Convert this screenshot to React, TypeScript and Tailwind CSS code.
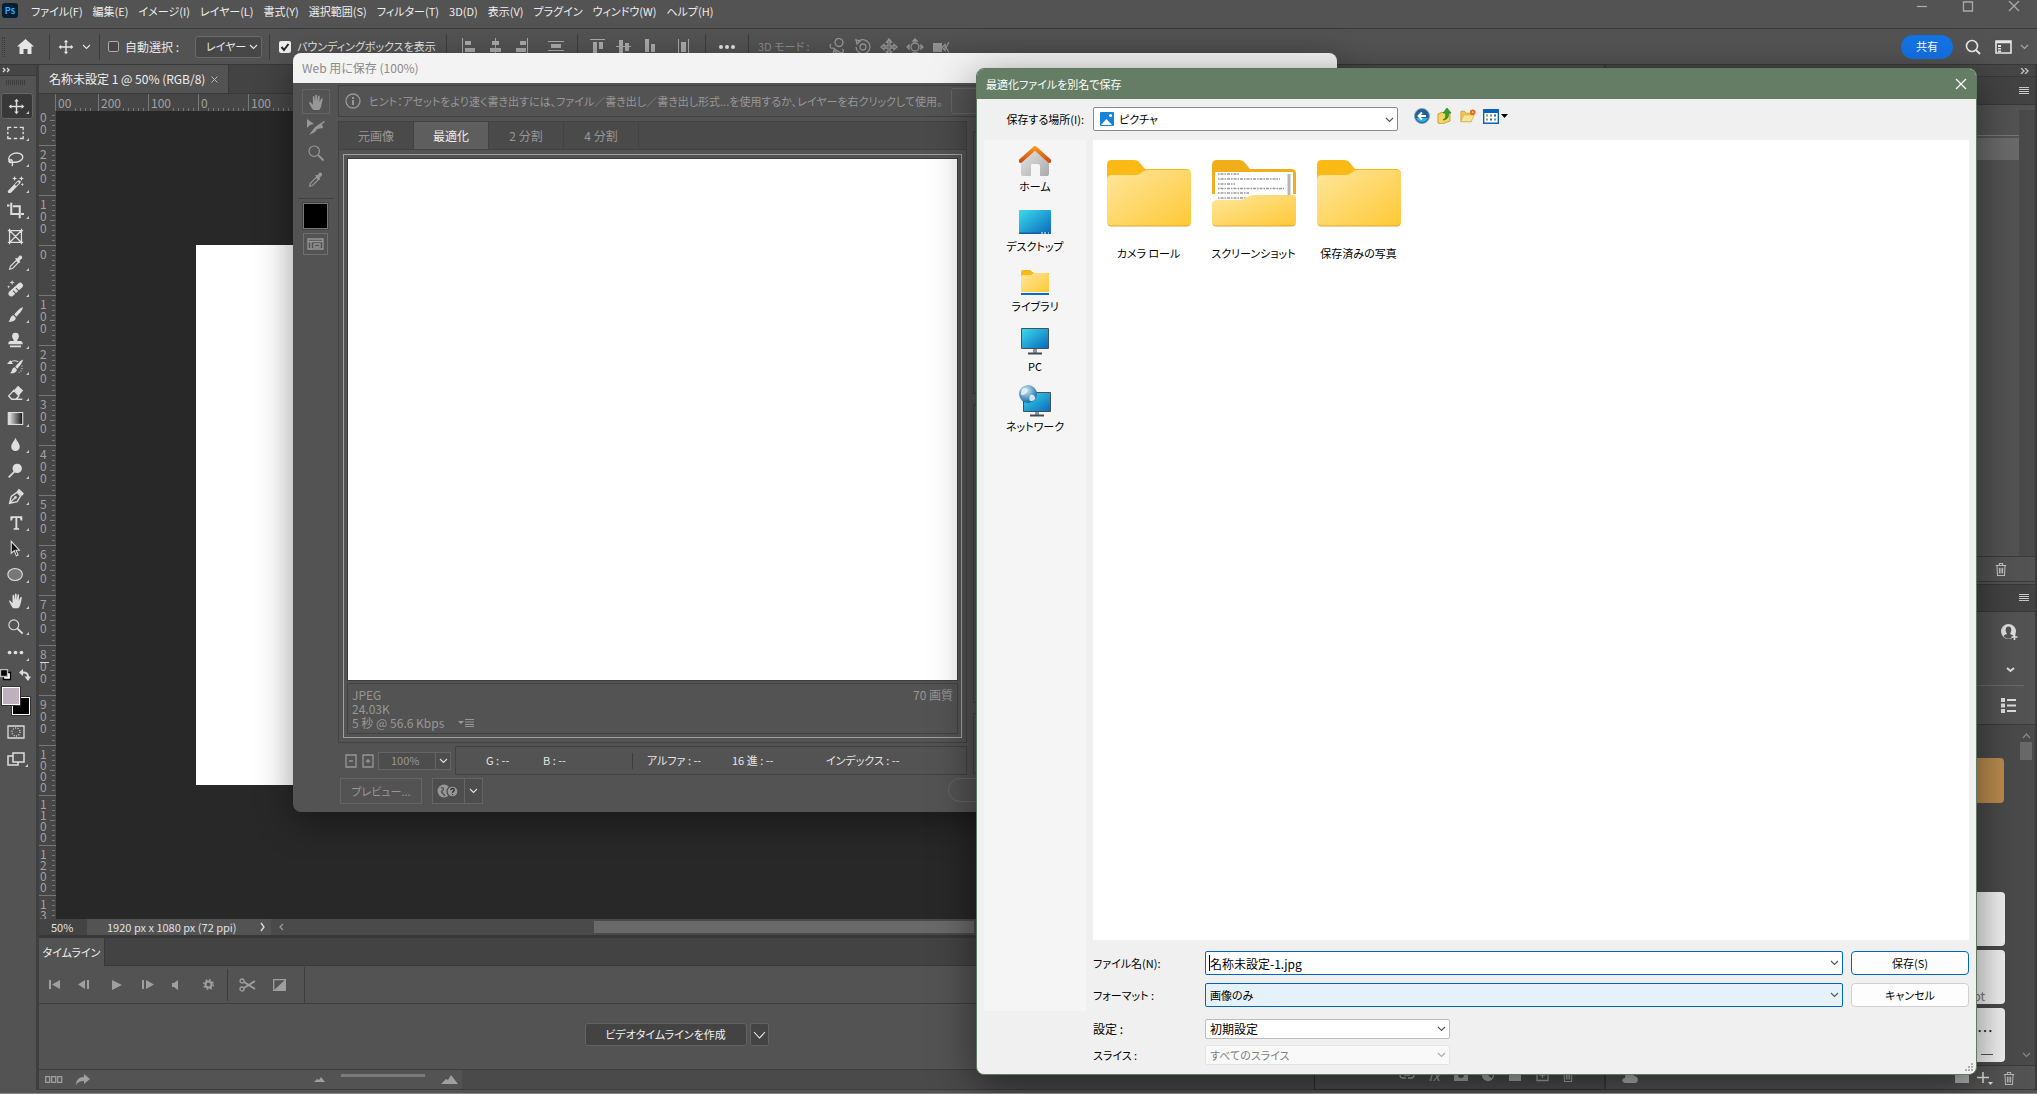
import type { ReactNode } from "react";

type SvgProps = { w?: number; h?: number; children: ReactNode; className?: string; box?: string };

function Svg({ w = 20, h = 20, box, children, className = "" }: SvgProps) {
  return (
    <svg
      width={w}
      height={h}
      viewBox={box ?? `0 0 ${w} ${h}`}
      fill="none"
      stroke="currentColor"
      strokeWidth={1.3}
      className={`shrink-0 ${className}`}
      aria-hidden="true"
    >
      {children}
    </svg>
  );
}

const fill = { fill: "currentColor", stroke: "none" };

function Chevron({ className = "" }: { className?: string }) {
  return (
    <Svg w={9} h={6} className={className}>
      <path strokeWidth="1.100" d="M1 1l3.500 3.500L8 1" />
    </Svg>
  );
}

const Hand = (
  <path
    {...fill}
    d="M6 18.5C4.200 16.500 2.500 13 1.600 10.800c-.5-1.300.8-1.800 1.600-.8l2.300 2.700V3.800c0-1.400 1.700-1.400 1.800 0l.5 5.200.5-6.700c.1-1.300 1.900-1.300 2 0l.1 6.700 1-6c.3-1.300 1.900-1 1.800.3L12.800 9.700l1.800-3.600c.6-1.200 2.200-.6 1.800.7-.8 2.600-1 6.200-2.200 9-.5 1.300-1.200 2.300-2 2.700z"
    transform="translate(1 .5)"
  />
);
const Dropper = (
  <>
    <path d="M3 18l1-3.500 7-7 2.500 2.500-7 7L3 18z" />
    <path {...fill} d="M9.500 5.500l1.200-1.200 1.300 1 2.500-3c1.500-1.500 4.500 1 3 3l-2.900 2.500 1 1.500-1.300 1.200z" />
  </>
);
const Move = (
  <>
    <path strokeWidth="1.700" d="M10 3v14M3 10h14" />
    <path {...fill} d="M10 .8L7.300 4h5.400zM10 19.200L7.300 16h5.400zM.8 10L4 7.300v5.400zM19.200 10L16 7.300v5.400z" />
  </>
);
const Lens = (
  <>
    <circle cx="8" cy="8" r="5.800" />
    <path strokeWidth="2.200" d="M12.400 12.400l6 6" />
  </>
);
const Trash = <path d="M3.500 5.500h13M8 5V3h4v2M5 6l.6 12h8.800L15 6M8 8.500v7M10 8.500v7M12 8.500v7" />;

const tools: { name: string; icon: ReactNode; noMenu?: boolean }[] = [
  { name: "移動ツール", icon: Move },
  { name: "長方形選択ツール", icon: <path strokeWidth="1.600" d="M1 7V4h4M8 4h4M15 4h4v3M19 9v3M19 14v3h-4M12 17H8M5 17H1v-3M1 12V9" /> },
  {
    name: "なげなわツール",
    icon: <path strokeWidth="1.600" d="M5.500 14.500C3.500 14 2 12 2 10c.5-4 5-6.500 9.500-6.500S19 6 18.500 9s-5 6-12 5.300M5 11.500c-2 0-3.300 1.200-2.500 2.500s3.500 1 3.700-.5-1-1.800-1.200-2zM6 15c1 1.500.5 3 0 4" />,
  },
  {
    name: "自動選択ツール",
    icon: (
      <>
        <path d="M3 18.500L14 7" strokeWidth="4" strokeLinecap="round" />
        <path d="M10 11l3.500-3.600" stroke="#535353" strokeWidth="2" />
        <path {...fill} d="M9 0l.8 2.200L12 3l-2.200.8L9 6l-.8-2.200L6 3l2.200-.8zM17 0l.8 2.200L20 3l-2.200.8L17 6l-.8-2.200L14 3l2.200-.8zM18 8l.6 1.500 1.400.5-1.400.5L18 12l-.6-1.500L16 10l1.400-.5z" />
      </>
    ),
  },
  { name: "切り抜きツール", icon: <path strokeWidth="2.400" d="M5 1v13h9M16.500 14H20M0 4h3M7 5h8v14" /> },
  { name: "フレームツール", noMenu: true, icon: <path strokeWidth="1.500" d="M3 3h14v14H3zM3 3l14 14M17 3L3 17M1 3h18M1 17h18M3 1v18M17 1v18" /> },
  { name: "スポイトツール", icon: Dropper },
  {
    name: "修復ブラシツール",
    icon: (
      <>
        <path d="M5 16L15.500 6.500" strokeWidth="6.500" strokeLinecap="round" />
        <path d="M7 12.500l4 4M10.500 9.500l4 4" stroke="#535353" strokeWidth="1.200" />
        <path {...fill} d="M6 0l.7 2L9 3l-2.300.8L6 6l-.7-2.200L3 3l2.300-1zM2 6l.5 1.500L4 8l-1.500.5L2 10l-.5-1.500L0 8l1.500-.5z" />
      </>
    ),
  },
  { name: "ブラシツール", icon: <path {...fill} d="M18.500 1.500c1 .8-3 7.200-7.500 11L8.500 10C12 5.500 17.500.5 18.500 1.500zM7.500 11l2.800 2.800c.2 3.700-4.800 5.200-8.800 4.700C4.500 17 3 12 7.500 11z" /> },
  { name: "コピースタンプツール", icon: <path {...fill} d="M10 1a4 4 0 014 4c0 2.500-2 3.500-2 5.500h4c1.500 0 2.500 1.200 2.500 4h-17c0-2.800 1-4 2.500-4h4C8 8.500 6 7.500 6 5a4 4 0 014-4zM3.500 16h13v2h-13z" /> },
  {
    name: "ヒストリーブラシツール",
    icon: (
      <>
        <path {...fill} d="M18.500 2c1 .8-2.500 7-6.500 10.500l-2.300-2.200C13 6 17.500 1.200 18.500 2zM9 11l2.500 2.500c.2 3.300-4 5-8 4.500C6.500 16.500 5 12 9 11zM0 7l4-4.500L7 7z" />
        <path d="M4 5c3-2.500 7-2 9-.5" />
        <path strokeDasharray="1 2" d="M17.500 9c1 4-1 8-5.500 9" />
      </>
    ),
  },
  {
    name: "消しゴムツール",
    icon: (
      <>
        <path strokeWidth="1.600" d="M8 7.500L2 14l3.500 4h5L14 14zM7 18h11" />
        <path {...fill} d="M8.500 7L13 2l6 5.500-5 6z" />
      </>
    ),
  },
  {
    name: "グラデーションツール",
    icon: (
      <>
        <defs>
          <linearGradient id="toolGradient">
            <stop offset="0" stopColor="#eee" />
            <stop offset="1" stopColor="#111" />
          </linearGradient>
        </defs>
        <rect x="1.500" y="3" width="17" height="14" fill="url(#toolGradient)" />
      </>
    ),
  },
  { name: "ぼかしツール", icon: <path {...fill} d="M10 2c1 3.500 5 6.500 5 10.500C15 15.500 13 17.500 10 17.500S5 15.500 5 12.500C5 8.500 9 5.500 10 2z" /> },
  {
    name: "覆い焼きツール",
    icon: (
      <>
        <circle cx="12" cy="7.500" r="5.500" {...fill} />
        <path strokeWidth="2" d="M2 18l7-7" />
      </>
    ),
  },
  {
    name: "ペンツール",
    icon: (
      <>
        <path strokeWidth="1.600" d="M3 18l2-8 7-5 4 4.500-4 6.500zM3.500 17.500l6-6" />
        <circle cx="10" cy="11" r="1.500" {...fill} />
        <path {...fill} d="M11.500 4L14 1l6 5.500-2.500 3z" />
      </>
    ),
  },
  { name: "横書き文字ツール", icon: <path {...fill} d="M4 2.500h14v5h-1.800L15 4.700h-2.900v11.800l2.100.4V18.500H7.800v-1.600l2.100-.4V4.700H7l-1.200 2.800H4z" /> },
  { name: "パスコンポーネント選択ツール", icon: <path d="M5 1.500v14l3.500-3 2.500 6 2-1-2.500-5.500h4z" fill="#111" /> },
  { name: "楕円形ツール", icon: <ellipse cx="9.500" cy="10" rx="8.500" ry="7" fill="#777" /> },
  { name: "手のひらツール", icon: Hand },
  { name: "ズームツール", icon: Lens },
  {
    name: "ツールバーを編集",
    icon: (
      <>
        <circle cx="3" cy="10" r="2.200" {...fill} />
        <circle cx="10" cy="10" r="2.200" {...fill} />
        <circle cx="17" cy="10" r="2.200" {...fill} />
      </>
    ),
  },
];

function Corner() {
  return (
    <Svg w={3} h={3} className="absolute right-[3px] bottom-1 text-[#c8c8c8]">
      <path {...fill} d="M3 0v3H0z" />
    </Svg>
  );
}

function MenuBar() {
  const items = ["ファイル(F)", "編集(E)", "イメージ(I)", "レイヤー(L)", "書式(Y)", "選択範囲(S)", "フィルター(T)", "3D(D)", "表示(V)", "プラグイン", "ウィンドウ(W)", "ヘルプ(H)"];
  return (
    <header className="flex h-[29px] shrink-0 items-start border-b border-[#3a3a3a] pl-0.5 text-[#eee]">
      <div className="mt-[3px] flex h-[15px] w-4 items-center justify-center rounded-[3px] bg-[#001e36] text-[9px] font-bold text-[#31a8ff]">Ps</div>
      <nav className="ml-2 flex h-[22px] items-center text-[11px]">
        {items.map((t) => (
          <button key={t} className="px-[5px] whitespace-nowrap">{t}</button>
        ))}
      </nav>
      <div className="mt-px ml-auto flex gap-[34px] pr-[17px] text-[#aaa]">
        <button aria-label="最小化"><Svg w={12} h={12}><path d="M1 5.500h10" /></Svg></button>
        <button aria-label="最大化"><Svg w={12} h={12}><path d="M1.500 1h9v9h-9z" /></Svg></button>
        <button aria-label="閉じる"><Svg w={12} h={12}><path d="M1 0l10 10M11 0L1 10" /></Svg></button>
      </div>
    </header>
  );
}

const Sep = ({ className = "" }: { className?: string }) => <span className={`h-[26px] w-px shrink-0 bg-[#3c3c3c] ${className}`} />;

function OptionsBar() {
  const align1 = [
    <path key="a" {...fill} d="M1 0h1v18H1zM4 3h6v4H4zM4 10h10v4H4z" />,
    <path key="b" {...fill} d="M8 0h1v18H8zM5 3h7v4H5zM3 10h11v4H3z" />,
    <path key="c" {...fill} d="M14 0h1v18h-1zM7 3h6v4H7zM3 10h10v4H3z" />,
  ];
  const align2 = [
    <path key="a" {...fill} d="M1 1h15v1H1zM4 4h4v12H4zM10 4h4v7h-4z" />,
    <path key="b" {...fill} d="M1 8h15v1H1zM4 2h4v14H4zM10 5h4v8h-4z" />,
    <path key="c" {...fill} d="M1 15h15v1H1zM4 1h4v13H4zM10 6h4v8h-4z" />,
  ];
  const modes = [
    <path key="1" d="M3 6c-2 3 0 5 2 4l8 5c3 0 3-3 1-4M7 5a4 4 0 117 2c-1 2-5 2-6 0zM6 12l3 3-4 1z" />,
    <path key="2" d="M5 3a7 7 0 11-3 6M2 2l4 1-3 3zM9 6a3 3 0 110 6 3 3 0 010-6z" />,
    <path key="3" d="M9 1l2.500 3H10v4h4V6.500L17 9l-3 2.500V10h-4v4h1.500L9 17l-2.500-3H8v-4H4v1.500L1 9l3-2.500V8h4V4H6.500z" />,
    <path key="4" d="M9 5a4 4 0 110 8 4 4 0 010-8zM9 1L7 3h4zM9 17l-2-2h4zM1 9l2-2v4zM17 9l-2-2v4z" />,
    <g key="5"><path {...fill} d="M1 5h9v9H1z" /><path d="M10 9.500l3-3v6zM17 4l-3 5.500 3 5" /></g>,
  ];
  return (
    <div className="flex h-9 shrink-0 items-center border-b border-[#383838] text-[#e6e6e6]">
      <span className="ml-0.5 h-5 w-[3px] border-x border-dotted border-[#3a3a3a]" />
      <button aria-label="ホーム" className="ml-3">
        <Svg w={17} h={16}><path {...fill} d="M8.500 0L17 7.500h-2.500V15h-4v-5h-4v5h-4V7.500H0z" /></Svg>
      </button>
      <Sep className="ml-[15px]" />
      <Svg w={16} h={16} box="0 0 20 20" className="ml-2">{Move}</Svg>
      <Chevron className="ml-2" />
      <Sep className="ml-2" />
      <input id="autoSel" type="checkbox" className="ml-2 h-[11px] w-[11px] appearance-none rounded-[2px] border border-[#aaa] bg-[#474747]" />
      <label htmlFor="autoSel" className="ml-1.5 w-[66px] whitespace-nowrap">自動選択 :</label>
      <span className="relative ml-1 flex items-center">
        <select aria-label="自動選択の対象" className="h-[22px] w-[67px] appearance-none rounded-[3px] border border-[#6a6a6a] bg-[#474747] pl-2.5 text-[11px]">
          <option>レイヤー</option>
        </select>
        <Chevron className="pointer-events-none absolute right-1" />
      </span>
      <Sep className="ml-[7px]" />
      <label className="ml-[9px] flex items-center gap-1.5 whitespace-nowrap">
        <span className="relative flex">
          <input type="checkbox" defaultChecked className="h-3 w-3 appearance-none rounded-[2px] bg-[#f0f0f0]" />
          <Svg w={12} h={12} className="pointer-events-none absolute inset-0 text-[#222]"><path strokeWidth="2" d="M2.500 6l2.500 3 4.500-6" /></Svg>
        </span>
        <span className="w-[138px] text-[11px]">バウンディングボックスを表示</span>
      </label>
      <Sep className="ml-[11px]" />
      <div className="ml-[14px] flex items-center gap-2 text-[#aaa]">
        {align1.map((a, i) => <Svg key={i} w={18} h={18}>{a}</Svg>)}
        <Svg w={18} h={18} className="ml-2"><path {...fill} d="M1 3h16v1H1zM4 6h10v4H4zM1 12h16v1H1z" /></Svg>
      </div>
      <Sep className="ml-3" />
      <div className="ml-[11px] flex items-center gap-2 text-[#aaa]">
        {align2.map((a, i) => <Svg key={i} w={18} h={18}>{a}</Svg>)}
        <Svg w={18} h={18} className="ml-2"><path {...fill} d="M3 1h1v16H3zM6 4h5v10H6zM13 1h1v16h-1z" /></Svg>
      </div>
      <Sep className="ml-3" />
      <Svg w={18} h={6} className="ml-3">
        <circle cx="3" cy="3" r="2" {...fill} /><circle cx="9" cy="3" r="2" {...fill} /><circle cx="15" cy="3" r="2" {...fill} />
      </Svg>
      <Sep className="ml-3" />
      <span className="ml-[9px] w-[66px] text-[11px] whitespace-nowrap text-[#8d8d8d]">3D モード :</span>
      <div className="ml-1 flex gap-2 text-[#999]">
        {modes.map((m, i) => <Svg key={i} w={18} h={18}>{m}</Svg>)}
      </div>
      <div className="ml-auto flex items-center pr-2">
        <button className="h-6 w-[52px] rounded-full bg-[#1473e6] text-[11px] text-white">共有</button>
        <Svg w={16} h={16} className="ml-3"><circle cx="7" cy="7" r="5.500" strokeWidth="1.600" /><path strokeWidth="2" d="M11 11l4 4" /></Svg>
        <Svg w={17} h={14} className="ml-3.5"><path strokeWidth="1.600" d="M1 1h15v12H1zM1 2.500h15" /><path {...fill} d="M3 5h3v2H3zM3 8h3v1.500H3zM3 10.500h3V12H3z" /></Svg>
        <Chevron className="ml-2 text-[#aaa]" />
      </div>
    </div>
  );
}

function ToolBar() {
  return (
    <aside className="flex w-[39px] shrink-0 flex-col border-r-[3px] border-[#3e3e3e] text-[#dedede]">
      <div className="flex h-[11px] items-center border-b border-[#3a3a3a] bg-[#464646] pl-0.5">
        <Svg w={8} h={6}><path d="M1 1l2 2-2 2M5 1l2 2-2 2" /></Svg>
      </div>
      <div className="flex h-[17px] items-start justify-center pt-1">
        <span className="mr-1 h-[5px] w-5 bg-[repeating-linear-gradient(90deg,#3d3d3d_0_1px,transparent_1px_2px)]" />
      </div>
      {tools.map((t, i) => (
        <button
          key={t.name}
          aria-label={t.name}
          className={`relative flex h-[26px] w-8 items-center justify-center pr-px ${i === 0 ? "ml-px rounded-[3px] border border-[#666] bg-[#383838]" : ""}`}
        >
          <Svg w={17} h={17} box="0 0 20 20">{t.icon}</Svg>
          {!t.noMenu && <Corner />}
        </button>
      ))}
      <div className="flex h-5 items-center justify-between pr-[5px]">
        <Svg w={12} h={12}><path d="M3.500 3.500h7v7h-7z" fill="#fff" stroke="#000" /><path d="M.5.500h7v7h-7z" fill="#000" stroke="#bbb" /></Svg>
        <Svg w={12} h={12}><path strokeWidth="2" d="M3 3.500h2c3 0 4 1 4 5" /><path {...fill} d="M0 3.500L4 0v7zM5.500 7.500h6.500L9 12z" /></Svg>
      </div>
      <div className="relative h-8">
        <span className="absolute top-3 left-3 h-[18px] w-[18px] border border-white bg-black outline outline-[#333]" />
        <span className="absolute top-0.5 left-0.5 h-[18px] w-[18px] border border-white bg-[#bfb0bc] outline outline-[#333]" />
      </div>
      <button aria-label="クイックマスク" className="flex h-[30px] w-[31px] items-center justify-center">
        <Svg w={18} h={14}><path d="M1 1h16v12H1z" /><circle cx="9" cy="7" r="4" strokeDasharray="1 1.500" /></Svg>
      </button>
      <button aria-label="スクリーンモード" className="relative flex h-6 w-[31px] items-center justify-center">
        <Svg w={18} h={14}><path strokeWidth="1.500" d="M6 4H1v9h10v-3" /><path strokeWidth="1.500" d="M6 1h11v9H6z" /></Svg>
        <Corner />
      </button>
    </aside>
  );
}

const hMarks = ["00", "200", "100", "0", "100"];
const vMarks = ["00", "200", "100", "0", "100", "200", "300", "400", "500", "600", "700", "800", "900", "1000", "1100", "1200", "13"];

function Workspace() {
  return (
    <main className="flex min-w-0 flex-1 flex-col">
      <div className="flex h-7 shrink-0 bg-[#434343]">
        <div className="flex items-center gap-2 border-r border-[#383838] bg-[#535353] px-2.5 text-[#eee]">
          <span className="w-[154px] whitespace-nowrap">名称未設定 1 @ 50% (RGB/8)</span>
          <button aria-label="タブを閉じる" className="text-[#bbb]"><Svg w={7} h={7}><path strokeWidth="1" d="M.5.500l6 6M6.500.500l-6 6" /></Svg></button>
        </div>
      </div>
      <div className="flex h-[18px] shrink-0 border-t border-[#383838] bg-[#464646] text-[#a2a2a2]">
        <div className="w-[17px] shrink-0 border-r border-[#777]" />
        <div className="flex min-w-0 flex-1">
          {hMarks.map((m, i) => (
            <div key={i} className={`relative shrink-0 pl-0.5 leading-[18px] ${i === 0 ? "w-[42px]" : "w-[50px] border-l border-[#777]"}`}>
              <span className="absolute inset-x-1 bottom-0 h-[3px] bg-[repeating-linear-gradient(90deg,#777_0_1px,transparent_1px_5px)]" />
              <span className="relative bg-[#464646]">{m}</span>
            </div>
          ))}
        </div>
      </div>
      <div className="flex min-h-0 flex-1">
        <div className="relative w-[17px] shrink-0 overflow-hidden bg-[#464646] text-[#a2a2a2]">
          <span className="absolute top-[551px] left-px z-10 h-px w-[9px] bg-[#d5d5d5]" />
          <div className="-mt-4">
            {vMarks.map((m, i) => (
              <div key={i} className="flex h-[50px] justify-between border-t border-[#777] pl-px">
                <span className={`w-2 break-all ${i === 0 ? "pt-[15px]" : "pt-0.5"} ${i > 12 ? "leading-[11px]" : "leading-3"}`}>{m}</span>
                <span className="flex w-[5px] flex-col items-end">
                  {Array.from({ length: 9 }, (_, k) => (
                    <span key={k} className={`mt-1 mr-px h-px bg-[#777] ${k === 4 ? "w-[5px]" : "w-[3px]"}`} />
                  ))}
                </span>
              </div>
            ))}
          </div>
        </div>
        <div className="min-w-0 flex-1 bg-[#282828]">
          <div className="mt-[134px] ml-[140px] h-[540px] w-[960px] bg-white" />
        </div>
      </div>
      <div className="flex h-4 shrink-0 items-center bg-[#4a4a4a] text-[11px] text-[#e0e0e0]">
        <span className="w-12 bg-[#434343] pl-3 leading-4">50%</span>
        <span className="flex h-4 w-[184px] items-center justify-between bg-[#535353] pr-1.5 pl-5">
          1920 px x 1080 px (72 ppi)
          <Svg w={5} h={10}><path d="M1 1l3 4-3 4" /></Svg>
        </span>
        <Svg w={5} h={8} className="ml-2 text-[#999]"><path d="M4 1L1 4l3 3" /></Svg>
        <span className="ml-[310px] h-3 w-[380px] bg-[#696969]" />
      </div>
      <Timeline />
    </main>
  );
}

function Timeline() {
  return (
    <section aria-label="タイムライン" className="flex h-[155px] shrink-0 flex-col border-t-[3px] border-[#383838] text-[#9f9f9f]">
      <div className="flex h-7 border-b border-[#383838] bg-[#434343]">
        <div className="-mb-px flex w-[66px] items-center justify-center border-r border-[#383838] bg-[#535353] text-[11px] text-[#eee]">タイムライン</div>
      </div>
      <div className="flex h-[38px] items-center border-b border-[#3c3c3c] pl-2.5">
        <Svg w={11} h={9}><path {...fill} d="M0 0h2v9H0zM11 0v9L3 4.500z" /></Svg>
        <Svg w={12} h={9} className="ml-[18px]"><path {...fill} d="M7 0v9L0 4.500zM9 0h2v9H9z" /></Svg>
        <Svg w={10} h={10} className="ml-[22px]"><path {...fill} d="M0 0l10 5-10 5z" /></Svg>
        <Svg w={12} h={9} className="ml-5"><path {...fill} d="M0 0h2v9H0zM4 0l8 4.500L4 9z" /></Svg>
        <Svg w={7} h={10} className="ml-[18px]"><path {...fill} d="M0 3h2l4-3v10L2 7H0z" /></Svg>
        <Svg w={11} h={11} className="ml-6"><circle cx="5.500" cy="5.500" r="3" strokeWidth="2" /><circle cx="5.500" cy="5.500" r="4.700" strokeWidth="1.500" strokeDasharray="1.800 1.900" /></Svg>
        <Sep className="ml-[13px] !h-8" />
        <Svg w={17} h={14} className="ml-[11px]"><circle cx="3" cy="3" r="2" /><circle cx="3" cy="11" r="2" /><path strokeWidth="1.800" d="M5 4l11 7M5 10l11-7" /></Svg>
        <Svg w={13} h={12} className="ml-[17px]"><path d="M.7.700h11.600v10.600H.7z" /><path {...fill} d="M12.500.500v11H.500z" /></Svg>
        <Sep className="ml-[18px] !h-9" />
      </div>
      <div className="flex flex-1 items-center justify-center">
        <div className="-mt-1 flex h-[23px] gap-[3px] text-[#f0f0f0]">
          <button className="w-[162px] rounded-[3px] border border-[#636363] bg-[#434343] text-[11px]">ビデオタイムラインを作成</button>
          <button aria-label="作成方法" className="flex w-[19px] items-center justify-center rounded-[2px] border border-[#636363] bg-[#434343]">
            <Svg w={13} h={8}><path strokeWidth="1.100" d="M1 1l5.500 6L12 1" /></Svg>
          </button>
        </div>
      </div>
      <div className="flex h-[21px] shrink-0 border-y border-[#3c3c3c] bg-[#4a4a4a]">
        <div className="flex w-[423px] items-center bg-[#535353] pl-1.5">
          <Svg w={18} h={7}><path d="M.7.700h4v5.600h-4zM6.700.700h4v5.600h-4zM12.700.700h4v5.600h-4z" /></Svg>
          <Svg w={14} h={11} className="ml-[13px]"><path {...fill} d="M0 11c0-5 3-8 8-8V0l6 5-6 5V7C4 7 2 8 0 11z" /></Svg>
          <Svg w={11} h={5} className="ml-[224px]"><path {...fill} d="M0 5l3-3 2 1 2-3 4 5z" /></Svg>
          <span className="mx-4 mb-2 h-[3px] w-[84px] bg-[#7a7a7a]" />
          <Svg w={17} h={9}><path {...fill} d="M0 9l5-5 2 1 3-5 7 9z" /></Svg>
        </div>
      </div>
    </section>
  );
}

const Lines = () => <Svg w={10} h={8}><path strokeWidth="1" d="M0 .5h10M0 2.500h10M0 4.500h10M0 6.500h10" /></Svg>;

function RightPanels() {
  return (
    <>
      <aside className="flex w-[290px] shrink-0 flex-col justify-end border-l border-[#2f2f2f] bg-[#4a4a4a]">
        <div className="flex h-[24px] items-center gap-[9px] border-b border-[#333] bg-[#4d4d4d] pr-6 pb-[5px] pl-[83px] text-[#aaa]">
          <Svg w={18} h={12}><path d="M8 3H5a3 3 0 000 6h3M10 3h3a3 3 0 010 6h-3M6 6h6" /></Svg>
          <span className="w-[18px] text-center text-sm leading-none italic">fx</span>
          <Svg w={18} h={14}><path {...fill} fillRule="evenodd" d="M2 1h14v12H2zM9 4a3 3 0 100 6 3 3 0 000-6z" /></Svg>
          <Svg w={18} h={14}><circle cx="9" cy="7" r="5.500" /><path {...fill} d="M5 3l8 8A5.500 5.500 0 015 3z" /></Svg>
          <Svg w={18} h={14}><path {...fill} d="M3 1h5l1 2h6v10H3z" /></Svg>
          <Svg w={18} h={14}><path d="M4 1h11v11.500H4zM9.500 4v6M6.500 7h6" /></Svg>
          <Svg w={16} h={16} box="0 0 20 20">{Trash}</Svg>
        </div>
      </aside>
      <aside className="flex w-[433px] min-w-0 shrink-0 flex-col border-x-2 border-[#3a3a3a] text-[#c8c8c8]">
        <div className="flex h-3 shrink-0 items-center justify-end border-b border-[#383838] bg-[#464646] pr-1.5">
          <Svg w={9} h={6}><path d="M1 0l3 3-3 3M5 0l3 3-3 3" /></Svg>
        </div>
        <div className="flex h-7 shrink-0 items-center justify-end border-b border-[#383838] bg-[#434343] pr-1.5"><Lines /></div>
        <div className="flex h-[451px] shrink-0 pt-[5px]">
          <div className="flex-1 pt-[25px]">
            <div className="border-t border-[#777] pt-0.5"><div className="h-[22px] bg-[#6b6b6b]" /></div>
          </div>
          <div className="w-4 bg-[#4a4a4a]" />
        </div>
        <div className="flex h-[26px] shrink-0 items-center justify-end gap-[19px] border-y border-[#3a3a3a] pr-[26px]">
          <Svg w={12} h={12}><path {...fill} d="M0 2h12v8H0z" /></Svg>
          <Svg w={16} h={16} box="0 0 20 20">{Trash}</Svg>
        </div>
        <div className="mt-0.5 flex h-7 shrink-0 items-center justify-end border-y border-[#383838] bg-[#434343] pr-1.5"><Lines /></div>
        <div className="flex h-[113px] shrink-0 flex-col items-end border-b border-[#3a3a3a] pr-[17px] text-[#dedede]">
          <Svg w={17} h={17} className="mt-3">
            <circle cx="7.500" cy="7.500" r="7.500" {...fill} />
            <path d="M7.500 2.500c3.500 0 3.500 5 1.500 7 .5 1.500 3 1 3.500 2.500-3 3.500-7 3.500-10 0 .5-1.500 3-1 3.500-2.500-2-2-2-7 1.500-7z" fill="#535353" stroke="none" />
            <path strokeWidth="1.600" d="M13.500 10v6M10.500 13h6" />
          </Svg>
          <Svg w={9} h={6} className="mt-[26px] mr-[3px]"><path strokeWidth="2" d="M1 1l3.500 3L8 1" /></Svg>
          <span className="mt-3 -mr-1.5 h-px w-full bg-[#6a6a6a]" />
          <Svg w={15} h={15} className="mt-3 mr-0.5"><path {...fill} d="M0 0h4v4H0zM6 1h9v2H6zM0 5.500h4v4H0zM6 6.500h9v2H6zM0 11h4v4H0zM6 12h9v2H6z" /></Svg>
        </div>
        <div className="flex min-h-0 flex-1 bg-[#4a4a4a]">
          <div className="flex-1 overflow-hidden pt-[33px] pr-0.5 pl-3">
            <div className="mr-px h-[45px] rounded bg-[#bb8c4e]" />
            <div className="mt-[89px] h-[54px] rounded bg-[#f2f2f2]" />
            <div className="mt-1 flex h-[54px] items-end justify-end rounded bg-[#f2f2f2] pr-5 text-[#777]">pt</div>
            <div className="mt-1 h-[54px] rounded bg-[#f2f2f2] pt-3.5 pr-3 text-right text-[#222]">
              <div className="text-base leading-4">…</div>
              <div className="mt-4 ml-auto h-px w-3 bg-[#555]" />
            </div>
          </div>
          <div className="flex w-7 flex-col items-center pt-2 pr-0.5 pb-[7px] pl-3 text-[#888]">
            <Svg w={9} h={6}><path d="M1 5l3.500-4L8 5" /></Svg>
            <span className="mt-[3px] h-[18px] w-3 bg-[#696969]" />
            <Chevron className="mt-auto" />
          </div>
        </div>
        <div className="flex h-[25px] shrink-0 items-center border-y border-[#3a3a3a] pr-[18px] pl-4 text-[#b5b5b5]">
          <Svg w={16} h={11}><path {...fill} d="M3 11c-4-1-3-5 0-5 0-7 8-8 9-2 5 0 5 7 1 7z" /></Svg>
          <Svg w={14} h={12} className="ml-auto"><path {...fill} d="M0 1h14v10H0z" /></Svg>
          <Svg w={16} h={14} className="ml-2 text-[#ddd]"><path strokeWidth="1.600" d="M6 1v11M0 6.500h12" /><path {...fill} d="M11 11h5l-2.500 3z" /></Svg>
          <Svg w={16} h={16} box="0 0 20 20" className="ml-2">{Trash}</Svg>
        </div>
      </aside>
    </>
  );
}

function WebDialog() {
  const tabs = ["元画像", "最適化", "2 分割", "4 分割"];
  return (
    <section
      role="dialog"
      aria-label="Web 用に保存"
      className="absolute top-[53px] right-[700px] bottom-[281px] left-[293px] flex flex-col overflow-hidden rounded-lg bg-[#535353] text-[#979797] shadow-[0_10px_36px_rgba(0,0,0,0.4)]"
    >
      <div className="flex h-[30px] shrink-0 items-center bg-[#f3f3f3] pl-[9px] text-[#8a8a8a]">Web 用に保存 (100%)</div>
      <div className="flex min-h-0 flex-1">
        <div className="flex w-[45px] shrink-0 flex-col items-center">
          <button aria-label="手のひら" className="mt-1.5 flex h-[25px] w-7 items-center justify-center border border-[#656565]"><Svg w={18} h={18} box="0 0 20 20">{Hand}</Svg></button>
          <button aria-label="スライス選択" className="flex h-[26px] items-center"><Svg w={18} h={18}><path {...fill} d="M0 1l7 5-4 1-3 3zM2 17l6-8 9-6 1 1-3 2 1 4-6 1-2 3z" /></Svg></button>
          <button aria-label="ズーム" className="flex h-[26px] items-center"><Svg w={18} h={18} box="0 0 20 20">{Lens}</Svg></button>
          <button aria-label="スポイト" className="flex h-[26px] items-center"><Svg w={17} h={17} box="0 0 20 20">{Dropper}</Svg></button>
          <span className="mt-1.5 h-px w-9 bg-[#424242]" />
          <span className="mt-1 h-[26px] w-[25px] border border-[#777] bg-black p-0.5 outline outline-[#444]" />
          <button aria-label="スライスの表示" className="mt-1 flex h-[22px] w-[25px] items-center justify-center border border-[#707070]"><Svg w={17} h={12}><path d="M1 1h15v10H1zM1 3.500h15M4 3.500V11" /><path d="M7 6h6v3H7z" /></Svg></button>
        </div>
        <div className="flex w-[629px] shrink-0 flex-col">
          <div className="mt-0.5 flex h-8 w-[720px] shrink-0 items-center border border-[#424242] pl-1.5">
            <Svg w={16} h={16}><circle cx="8" cy="8" r="7" /><path strokeWidth="2" d="M8 7v5M8 4v2" /></Svg>
            <span className="ml-2 w-[576px] text-[11px] whitespace-nowrap">ヒント：アセットをより速く書き出すには、ファイル／書き出し／書き出し形式...を使用するか、レイヤーを右クリックして使用。</span>
            <span className="ml-1.5 h-[26px] flex-1 rounded-[3px] border border-[#656565]" />
          </div>
          <div className="mt-1 flex h-[29px] shrink-0 items-stretch border border-[#424242] bg-[#4a4a4a]">
            {tabs.map((t) => (
              <button key={t} className={`w-[75px] border-r border-[#424242] ${t === "最適化" ? "bg-[#5e5e5e] text-[#eee]" : ""}`}>{t}</button>
            ))}
          </div>
          <div className="flex min-h-0 flex-1 flex-col border border-t-0 border-[#424242] p-1">
            <div className="flex min-h-0 flex-1 flex-col border border-[#a0a0a0] p-[3px]">
              <div className="flex-1 border border-[#3d3d3d] bg-white" />
              <div className="mt-0.5 flex h-[51px] items-start justify-between border border-[#424242] px-1 pt-1 leading-[14px]">
                <div>
                  <div>JPEG</div>
                  <div>24.03K</div>
                  <div className="flex items-center gap-[14px]">5 秒 @ 56.6 Kbps
                    <Svg w={16} h={8}><path {...fill} d="M0 2h6L3 5zM7 0h9v1H7zM7 2.500h9v1H7zM7 5h9v1H7zM7 7h9v1H7z" /></Svg>
                  </div>
                </div>
                <div>70 画質</div>
              </div>
            </div>
          </div>
          <div className="mt-[3px] flex h-[29px] shrink-0 items-center">
            <Svg w={12} h={14} className="ml-[7px]"><path d="M1 1h10v12H1zM4 7h4" /></Svg>
            <Svg w={12} h={14} className="ml-[5px]"><path d="M1 1h10v12H1zM4 7h4M6 5v4" /></Svg>
            <span className="relative ml-1 flex items-center">
              <select aria-label="ズームレベル" className="h-[18px] w-[73px] appearance-none border border-[#656565] bg-[#4d4d4d] pl-3 text-[11px]"><option>100%</option></select>
              <span className="pointer-events-none absolute right-0 flex h-[18px] w-4 items-center justify-center border-l border-[#656565] text-[#ddd]"><Chevron /></span>
            </span>
            <div className="ml-1 grid h-[29px] flex-1 grid-cols-[57px_89px_15px_85px_94px_1fr] items-center border border-[#424242] pl-[30px] text-[11px] whitespace-nowrap text-[#e6e6e6]">
              <span>G : --</span>
              <span>B : --</span>
              <span className="h-4 w-px bg-[#3c3c3c]" />
              <span>アルファ : --</span>
              <span>16 進 : --</span>
              <span>インデックス : --</span>
            </div>
          </div>
          <div className="mt-[3px] mb-2 flex h-[26px] w-[706px] shrink-0 gap-2.5 pl-0.5">
            <button className="w-[82px] border border-[#656565] text-[11px]">プレビュー...</button>
            <button aria-label="ブラウザーでプレビュー" className="flex w-[51px] items-center border border-[#656565] bg-[#4d4d4d] pl-1">
              <Svg w={23} h={14}><circle cx="7" cy="7" r="6.500" {...fill} /><path d="M4 4c3-1 3 2 1 3s2 3 3 5" stroke="#4d4d4d" /><circle cx="15.500" cy="7.500" r="5.500" fill="#979797" stroke="#4d4d4d" /><path d="M13.800 6c0-2 3.500-2 3.500 0 0 1.300-1.700 1-1.700 3m0 1v1" stroke="#333" /></Svg>
              <span className="ml-1 flex h-full items-center border-l border-[#656565] pl-1 text-[#ddd]"><Chevron /></span>
            </button>
            <span className="ml-auto h-6 w-24 rounded-full border border-[#656565]" />
          </div>
        </div>
        <div className="mt-12 flex min-w-0 flex-1 flex-col gap-2.5 px-1.5 pb-[38px]">
          <div className="h-[263px] border border-[#424242]" />
          <div className="flex-1 border border-[#424242]" />
          <div className="h-[61px] border border-[#424242]" />
        </div>
      </div>
    </section>
  );
}

function GradientDefs() {
  return (
    <svg width="0" height="0" className="absolute" aria-hidden="true">
      <defs>
        <linearGradient id="folderFront" x1="0" y1="0" x2="1" y2="1"><stop offset="0" stopColor="#ffe69c" /><stop offset="1" stopColor="#ffc936" /></linearGradient>
        <linearGradient id="screen" x1="0" y1="0" x2="1" y2="1"><stop offset="0" stopColor="#3bdcec" /><stop offset="1" stopColor="#0a68bd" /></linearGradient>
        <linearGradient id="roof" x1="0" y1="0" x2="0" y2="1"><stop offset="0" stopColor="#f7921e" /><stop offset="1" stopColor="#d04e10" /></linearGradient>
        <linearGradient id="wall" x1="0" y1="0" x2="1" y2="1"><stop offset="0" stopColor="#e8e8e8" /><stop offset="1" stopColor="#aaaaaa" /></linearGradient>
        <radialGradient id="globe" cx=".4" cy=".3" r=".7"><stop offset="0" stopColor="#cdeaf8" /><stop offset="1" stopColor="#1768a2" /></radialGradient>
      </defs>
    </svg>
  );
}

function Folder({ preview = false }: { preview?: boolean }) {
  return (
    <svg width="84" height="67" viewBox="0 0 84 67" aria-hidden="true">
      <path d="M0 5q0-5 5-5h22q4 0 6 3l5 6h41q5 0 5 5v20H0z" fill={preview ? "#f0ae1b" : "#fbb916"} />
      {preview ? (
        <>
          <path d="M3 12h78v30H3z" fill="#fff" />
          <path d="M77 14v22" stroke="#b5b5b5" strokeWidth="3" />
          <path d="M6 14h21M6 19h62M6 24h17M6 28.500h66M6 33h31M6 38h28" stroke="#999" strokeWidth="1.500" strokeDasharray="1.500 1 3 1" />
          <path d="M0 44q0-3 4-4h23q4 0 6-2l5-2q2-1 5-1h38q3 0 3 3v24q0 4-4 4H4q-4 0-4-4z" fill="url(#folderFront)" />
        </>
      ) : (
        <path d="M0 20q0-5 5-5h23q4 0 6-2l3-2q2-1 5-1h38q4 0 4 4v48q0 4-4 4H4q-4 0-4-4z" fill="url(#folderFront)" />
      )}
      <path d="M1 64.500q1 1.500 3 1.500h76q2 0 3-1.500" stroke="#dca32e" fill="none" />
    </svg>
  );
}

const places: { label: string; icon: ReactNode }[] = [
  {
    label: "ホーム",
    icon: (
      <>
        <path d="M2 15L16 2l14 13v14q0 2-2 2h-7V21q0-2-2-2h-6q-1 0-1 2v10H4q-2 0-2-2z" fill="url(#wall)" />
        <path d="M1.500 16L16 3l14.500 13" fill="none" stroke="url(#roof)" strokeWidth="4" strokeLinecap="round" strokeLinejoin="round" />
      </>
    ),
  },
  {
    label: "デスクトップ",
    icon: (
      <>
        <rect y="5" width="32" height="24" rx="1" fill="url(#screen)" />
        <path d="M0 27.500h32V28q0 1-1 1H1q-1 0-1-1z" fill="#0b5ea0" />
        <path d="M22 28h2M25 28h2M29 28h1" stroke="#fff" />
      </>
    ),
  },
  {
    label: "ライブラリ",
    icon: (
      <>
        <path d="M2 7q0-2 2-2h7l4 3h15v8H2z" fill="#fbb916" />
        <path d="M2 12q0-2 2-2h8l3-2h13q2 0 2 2v17H2z" fill="url(#folderFront)" />
        <path d="M2 28h28v2H2z" fill="#0f6cbd" />
      </>
    ),
  },
  {
    label: "PC",
    icon: (
      <>
        <path d="M2.500 3.500h27v20h-27z" fill="url(#screen)" stroke="#44525d" />
        <path d="M14 24h4v4h-4z" fill="#8a949c" />
        <path d="M9 27.500h14v2H9z" fill="#3f4a52" />
      </>
    ),
  },
  {
    label: "ネットワーク",
    icon: (
      <>
        <path d="M4.500 7.500h27v19h-27z" fill="url(#screen)" stroke="#44525d" />
        <path d="M16 27h4v3h-4z" fill="#8a949c" />
        <path d="M11 29.500h14v2H11z" fill="#3f4a52" />
        <circle cx="9" cy="9" r="9" fill="url(#globe)" />
        <path d="M3 4q3-2 5 0t-2 5-4-1zM11 10q4-1 5 2t-3 4-2-6z" fill="#e8f4fa" opacity=".85" />
      </>
    ),
  },
];

const field = "w-full appearance-none rounded-[2px] border px-1 text-black";

function SaveDialog() {
  return (
    <section
      role="dialog"
      aria-label="最適化ファイルを別名で保存"
      className="absolute top-[68px] right-[60px] bottom-[18px] left-[976px] flex flex-col overflow-hidden rounded-lg border border-[#5f7a60] bg-[#f0f0f0] text-[11px] text-black shadow-[0_12px_44px_rgba(0,0,0,0.5)]"
    >
      <GradientDefs />
      <div className="flex h-[30px] shrink-0 items-center justify-between bg-[#657d65] pr-[9px] pl-[9px] text-white">
        最適化ファイルを別名で保存
        <button aria-label="ダイアログを閉じる"><Svg w={12} h={12}><path d="M1 1l10 10M11 1L1 11" /></Svg></button>
      </div>
      <div className="flex h-[41px] shrink-0 items-start pt-2">
        <label htmlFor="place" className="w-[107px] text-right leading-[25px]">保存する場所(I):</label>
        <span className="relative ml-[9px] w-[305px]">
          <select id="place" className="h-6 w-full appearance-none rounded-[2px] border border-[#8a8a8a] bg-white pl-[25px] text-[11px]"><option>ピクチャ</option></select>
          <svg width="14" height="14" viewBox="0 0 14 14" className="pointer-events-none absolute top-[5px] left-[7px]" aria-hidden="true">
            <rect width="14" height="14" rx="1" fill="#1683d8" /><path d="M1 13l5.500-6L12 13z" fill="#fff" /><circle cx="10.500" cy="3.500" r="1.500" fill="#fff" />
          </svg>
          <Chevron className="pointer-events-none absolute top-[10px] right-1 text-[#555]" />
        </span>
        <div className="ml-4 flex items-center gap-[7px] pt-px">
          <button aria-label="戻る">
            <svg width="16" height="16" viewBox="0 0 16 16" aria-hidden="true"><circle cx="8" cy="8" r="7.500" fill="#215f96" stroke="#8aa2b8" /><path d="M2 10a6.500 6.500 0 0012 0z" fill="#2fb0dd" /><path d="M12 8H5M8 4.500L4.500 8 8 11.500" stroke="#fff" strokeWidth="2" fill="none" /></svg>
          </button>
          <button aria-label="上のフォルダーへ">
            <svg width="16" height="16" viewBox="0 0 16 16" aria-hidden="true"><path d="M1 6l4-2 1 1 7-1v9l-8 3-4-1z" fill="#f5d566" stroke="#c9a233" /><path d="M6 12c3-2 3-4 2.500-7H6l4-5 4 5h-2.500C12 9 10 12 6 12z" fill="#2fa52c" stroke="#187518" strokeWidth=".6" /></svg>
          </button>
          <button aria-label="新しいフォルダー">
            <svg width="16" height="16" viewBox="0 0 17 16" aria-hidden="true"><path d="M1 3h4l1 2h6v9H1z" fill="#f0c850" stroke="#cda63c" /><path d="M1 14l3-7h11l-3 7z" fill="#fbe594" stroke="#d8b24a" strokeWidth=".8" /><circle cx="13.500" cy="4" r="2" fill="#ffd26a" stroke="#f0622a" strokeWidth="2" /></svg>
          </button>
          <button aria-label="表示メニュー" className="flex items-center gap-0.5">
            <svg width="16" height="15" viewBox="0 0 16 15" aria-hidden="true"><path d="M.7.700h14.600v13.600H.7z" fill="#fff" stroke="#0a63b8" strokeWidth="1.400" /><path d="M0 0h16v4H0z" fill="#0a63b8" /><path d="M3 6.500h2M3 10.500h2" stroke="#9a8f7e" strokeWidth="2" /><path d="M7 6.500h2M11 10.500h2" stroke="#5aa070" strokeWidth="2" /><path d="M7 10.500h2M11 6.500h2" stroke="#36589e" strokeWidth="2" /></svg>
            <Svg w={7} h={5}><path {...fill} d="M0 0h7L3.500 4z" /></Svg>
          </button>
        </div>
      </div>
      <div className="flex min-h-0 flex-1 pr-[7px] pl-[7px]">
        <nav className="mb-[63px] flex w-[102px] shrink-0 flex-col bg-[#f5f5f5] pt-[5px]">
          {places.map((p) => (
            <button key={p.label} className="flex h-[60px] flex-col items-center">
              <svg width="32" height="32" viewBox="0 0 32 32" aria-hidden="true">{p.icon}</svg>
              <span className="leading-[18px]">{p.label}</span>
            </button>
          ))}
        </nav>
        <div className="ml-[7px] flex min-w-0 flex-1 flex-col">
          <div className="flex min-h-0 flex-1 bg-white pt-5 pl-[3px]">
            {["カメラ ロール", "スクリーンショット", "保存済みの写真"].map((f, i) => (
              <button key={f} className="flex h-[101px] w-[105px] flex-col items-center justify-between">
                <Folder preview={i === 1} />
                <span>{f}</span>
              </button>
            ))}
          </div>
          <div className="grid shrink-0 grid-cols-[112px_1fr_118px] gap-y-2 pt-[11px]">
            <label htmlFor="fname" className="self-center">ファイル名(N):</label>
            <span className="relative mr-2 flex items-center">
              <input id="fname" defaultValue="名称未設定-1.jpg" className={`${field} h-6 border-[#0067c0] bg-white text-xs`} />
              <span className="pointer-events-none absolute left-1 h-4 w-px bg-black" />
              <Chevron className="pointer-events-none absolute right-1 text-[#555]" />
            </span>
            <button className="h-6 rounded border border-[#0067c0] bg-[#fdfdfd]">保存(S)</button>
            <label htmlFor="fmt" className="self-center">フォーマット :</label>
            <span className="relative mr-2 flex items-center">
              <select id="fmt" className={`${field} h-6 border-[#0067c0] bg-[#e5f1fb] text-[11px]`}><option>画像のみ</option></select>
              <Chevron className="pointer-events-none absolute right-1 text-[#555]" />
            </span>
            <button className="h-6 rounded border border-[#d0d0d0] bg-[#fdfdfd]">キャンセル</button>
          </div>
          <div className="grid shrink-0 grid-cols-[112px_245px] gap-y-1.5 pt-3 pb-[9px]">
            <label htmlFor="preset" className="self-center text-xs">設定 :</label>
            <span className="relative flex items-center">
              <select id="preset" className={`${field} h-5 border-[#bdbdbd] bg-white text-xs`}><option>初期設定</option></select>
              <Chevron className="pointer-events-none absolute right-1 text-[#555]" />
            </span>
            <label htmlFor="slice" className="self-center">スライス :</label>
            <span className="relative flex items-center">
              <select id="slice" disabled className={`${field} h-5 border-[#e4e4e4] bg-[#f9f9f9] text-[11px] !text-[#808080] opacity-100`}><option>すべてのスライス</option></select>
              <Chevron className="pointer-events-none absolute right-1 text-[#aaa]" />
            </span>
          </div>
        </div>
      </div>
      <Svg w={9} h={9} className="absolute right-0.5 bottom-0.5 text-[#b0b0b0]"><path {...fill} d="M6 0h2v2H6zM3 3h2v2H3zM6 3h2v2H6zM0 6h2v2H0zM3 6h2v2H3zM6 6h2v2H6z" /></Svg>
    </section>
  );
}

export default function App() {
  return (
    <div className="relative flex h-screen w-full flex-col overflow-hidden border-b border-[#858585] bg-[#535353] font-['Noto_Sans_CJK_JP',sans-serif] text-xs [font-feature-settings:'palt']">
      <MenuBar />
      <OptionsBar />
      <div className="flex min-h-0 flex-1 pb-[3px]">
        <ToolBar />
        <Workspace />
        <RightPanels />
      </div>
      <WebDialog />
      <SaveDialog />
    </div>
  );
}
